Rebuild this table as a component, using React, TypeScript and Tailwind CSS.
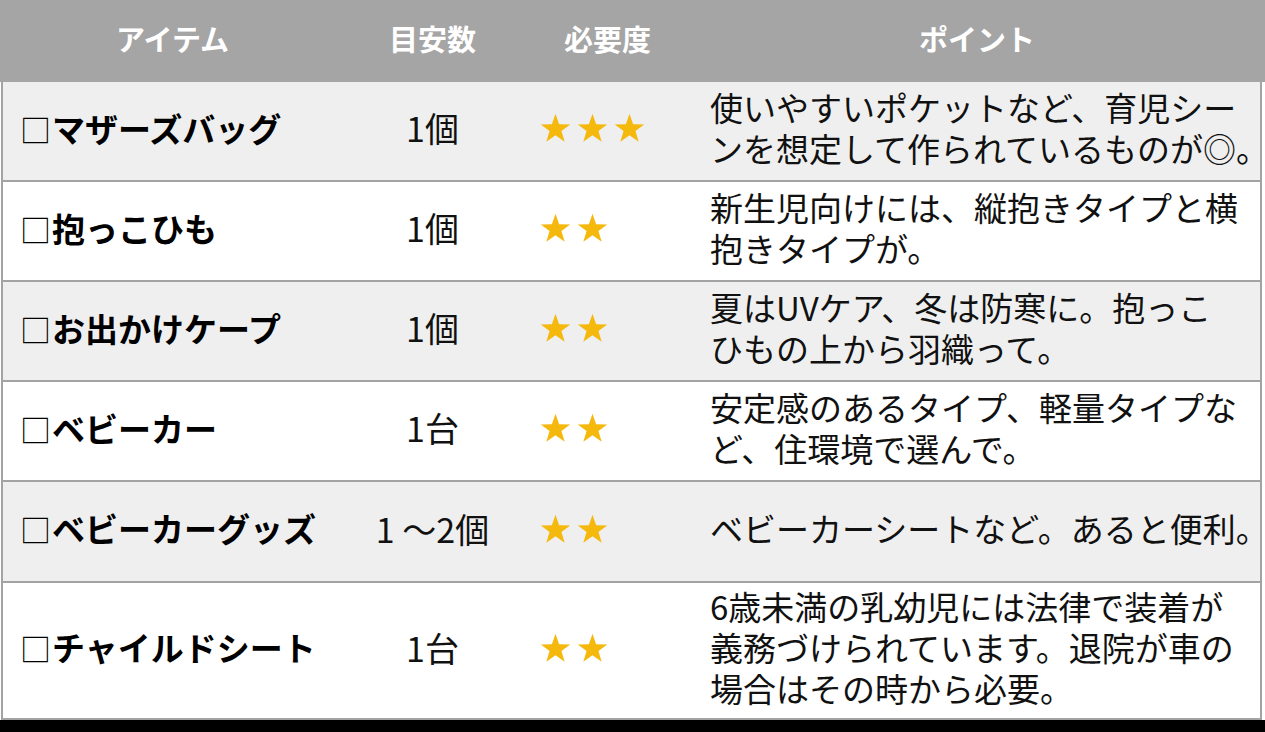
const rows = [
  { item: "マザーズバッグ", count: "1個", stars: 3, point: ["使いやすいポケットなど、育児シー", "ンを想定して作られているものが◎。"], h: "h-[100px]" },
  { item: "抱っこひも", count: "1個", stars: 2, point: ["新生児向けには、縦抱きタイプと横", "抱きタイプが。"], h: "h-[100px]" },
  { item: "お出かけケープ", count: "1個", stars: 2, point: ["夏はUVケア、冬は防寒に。抱っこ", "ひもの上から羽織って。"], h: "h-[100px]" },
  { item: "ベビーカー", count: "1台", stars: 2, point: ["安定感のあるタイプ、軽量タイプな", "ど、住環境で選んで。"], h: "h-[100px]" },
  { item: "ベビーカーグッズ", count: "1 ～2個", stars: 2, point: ["ベビーカーシートなど。あると便利。"], h: "h-[101px]" },
  { item: "チャイルドシート", count: "1台", stars: 2, point: ["6歳未満の乳幼児には法律で装着が", "義務づけられています。退院が車の", "場合はその時から必要。"], h: "h-[137px]" },
];

function Star() {
  return (
    <svg width="31" height="30" viewBox="0 0 24 23">
      <polygon
        points="12,0.5 14.8,8.6 23.4,8.7 16.6,13.9 19.1,22.2 12,17.2 4.9,22.2 7.4,13.9 0.6,8.7 9.2,8.6"
        fill="#f5b80d"
      />
    </svg>
  );
}

export default function App() {
  return (
    <div
      className="w-[1265px] h-[732px] bg-white flex flex-col overflow-hidden"
      style={{ fontFamily: '"Noto Sans CJK JP", "Noto Sans", sans-serif' }}
    >
      <div className="h-[82px] bg-[#a5a5a5] grid grid-cols-[345px_175px_175px_1fr] items-center text-white font-bold text-[29px] pb-[4px] shrink-0">
        <div className="text-center">アイテム</div>
        <div className="text-center">目安数</div>
        <div className="text-center">必要度</div>
        <div className="text-center pr-[6px]">ポイント</div>
      </div>
      <div className="ml-[1px] mr-[3px] border-x-2 border-[#a3a3a3] flex flex-col">
        {rows.map((r, i) => (
          <div
            key={i}
            className={`${r.h} grid grid-cols-[342px_175px_175px_1fr] items-center border-b-2 border-[#a3a3a3] pb-[6px] ${i % 2 === 0 ? "bg-[#efefef]" : "bg-white"}`}
          >
            <div className="pl-[17px] text-[33px] font-bold text-black whitespace-nowrap leading-none flex items-center">
              <span className="font-normal text-[31px] mr-[1px]">□</span>
              {r.item}
            </div>
            <div className="text-center text-[34px] text-[#111] leading-none whitespace-nowrap">
              {r.count}
            </div>
            <div className="pl-[20px] flex gap-[6px]">
              {Array.from({ length: r.stars }).map((_, k) => (
                <Star key={k} />
              ))}
            </div>
            <div className="pl-[15px] text-[33px] leading-[41px] text-[#111] whitespace-nowrap">
              {r.point.map((l, k) => (
                <div key={k} className="h-[41px]">{l}</div>
              ))}
            </div>
          </div>
        ))}
      </div>
      <div className="flex-1 bg-black" />
    </div>
  );
}
